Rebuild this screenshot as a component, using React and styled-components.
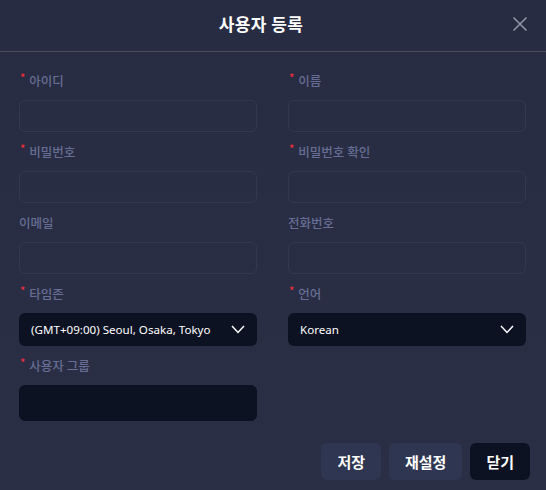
import React from 'react'
import styled, {createGlobalStyle} from 'styled-components'

const GlobalStyle = createGlobalStyle`
  html, body {
    margin: 0;
    padding: 0;
    background: #282d43;
  }
  body {
    font-family: "Noto Sans CJK KR", "Noto Sans", sans-serif;
  }
  * { box-sizing: border-box; }
`

const Modal = styled.div`
  width: 546px;
  height: 490px;
  display: flex;
  flex-direction: column;
  background: linear-gradient(180deg, #272c42 0%, #2a2f46 100%);
`

const Header = styled.header`
  position: relative;
  height: 52px;
  display: flex;
  align-items: center;
  justify-content: center;
  padding-right: 24px;
  border-bottom: 1px solid #4b4f5c;
`

const Title = styled.h1`
  margin: 0 0 4px;
  font-size: 17px;
  font-weight: 700;
  color: #ffffff;
  letter-spacing: 0.4px;
`

const CloseButton = styled.button`
  position: absolute;
  right: 17px;
  top: 15px;
  width: 18px;
  height: 18px;
  padding: 0;
  border: none;
  background: none;
  display: flex;
  align-items: center;
  justify-content: center;
  cursor: pointer;
`

const Form = styled.div`
  display: grid;
  grid-template-columns: 238px 238px;
  column-gap: 31px;
  row-gap: 10px;
  padding: 19px 20px 0 19px;
`

const Field = styled.div`
  display: flex;
  flex-direction: column;
`

const Label = styled.label`
  height: 18px;
  margin-bottom: 11px;
  display: flex;
  align-items: center;
  font-size: 12.5px;
  font-weight: 500;
  color: #676d94;
`

const Star = styled.span`
  color: #ee2e3c;
  font-size: 11px;
  margin: -6px 4px 0 1px;
  line-height: 1;
`

const Input = styled.div`
  height: ${p => p.$h || 32}px;
  border-radius: 6px;
  border: 1px solid ${p => p.$filled ? '#0d1222' : '#313852'};
  background: ${p => p.$filled ? '#0d1222' : 'transparent'};
`

const Select = styled.div`
  height: 33px;
  border-radius: 6px;
  background: #0d1222;
  display: flex;
  align-items: center;
  justify-content: space-between;
  padding: 0 12px 0 12px;
  font-family: "Noto Sans", sans-serif;
  font-size: 11.6px;
  color: #ffffff;
`

const Footer = styled.footer`
  display: flex;
  justify-content: flex-end;
  gap: 8px;
  padding: 22px 16px 0 0;
`

const Button = styled.button`
  height: 37px;
  padding: 0 16px;
  border: none;
  border-radius: 6px;
  background: ${p => p.$dark ? '#0d1222' : '#2f3651'};
  color: #ffffff;
  font-family: "Noto Sans CJK KR", sans-serif;
  font-size: 15px;
  font-weight: 700;
  cursor: pointer;
`

const Chevron = () => (
  <svg width="14" height="9" viewBox="0 0 14 9" fill="none">
    <path d="M1 1l6 6.5L13 1" stroke="#ffffff" strokeWidth="1.5" />
  </svg>
)

const FieldLabel = ({required, children}) => (
  <Label>
    {required && <Star>*</Star>}
    {children}
  </Label>
)

const App = () => {
  return (
    <Modal>
      <GlobalStyle />
      <Header>
        <Title>사용자 등록</Title>
        <CloseButton aria-label="close">
          <svg width="16" height="16" viewBox="0 0 16 16">
            <path d="M1.5 1.5l13 13M14.5 1.5l-13 13" stroke="#9399a8" strokeWidth="1.5" />
          </svg>
        </CloseButton>
      </Header>

      <Form>
        <Field>
          <FieldLabel required>아이디</FieldLabel>
          <Input />
        </Field>
        <Field>
          <FieldLabel required>이름</FieldLabel>
          <Input />
        </Field>
        <Field>
          <FieldLabel required>비밀번호</FieldLabel>
          <Input />
        </Field>
        <Field>
          <FieldLabel required>비밀번호 확인</FieldLabel>
          <Input />
        </Field>
        <Field>
          <FieldLabel>이메일</FieldLabel>
          <Input />
        </Field>
        <Field>
          <FieldLabel>전화번호</FieldLabel>
          <Input />
        </Field>
        <Field>
          <FieldLabel required>타임존</FieldLabel>
          <Select>
            <span>(GMT+09:00) Seoul, Osaka, Tokyo</span>
            <Chevron />
          </Select>
        </Field>
        <Field>
          <FieldLabel required>언어</FieldLabel>
          <Select>
            <span>Korean</span>
            <Chevron />
          </Select>
        </Field>
        <Field>
          <FieldLabel required>사용자 그룹</FieldLabel>
          <Input $h={36} $filled />
        </Field>
      </Form>

      <Footer>
        <Button>저장</Button>
        <Button>재설정</Button>
        <Button $dark>닫기</Button>
      </Footer>
    </Modal>
  )
}

export default App
